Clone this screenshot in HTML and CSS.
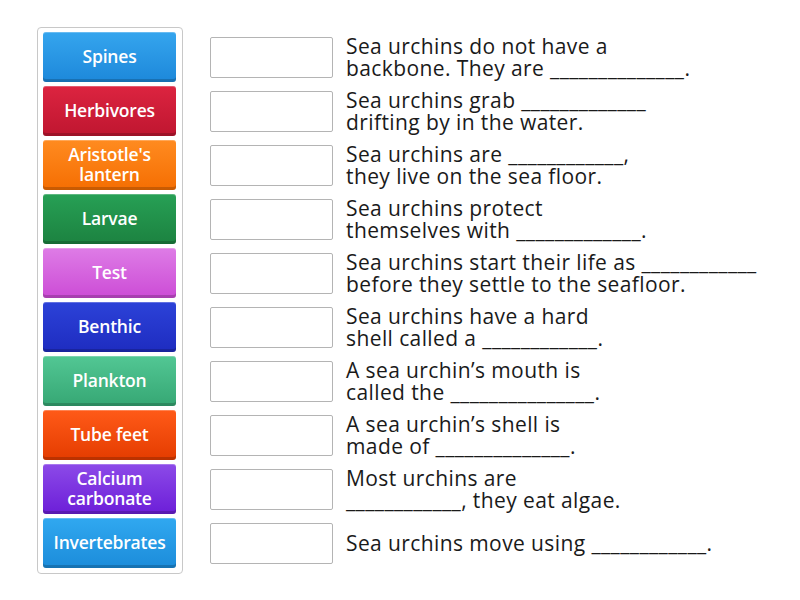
FILE: index.html
```html
<!DOCTYPE html>
<html>
<head>
<meta charset="utf-8">
<link rel="stylesheet" href="styles.css">
</head>
<body>
<div class="game">
  <div class="bank">
    <div class="tile blue">Spines</div>
    <div class="tile red">Herbivores</div>
    <div class="tile orange">Aristotle's lantern</div>
    <div class="tile green">Larvae</div>
    <div class="tile pink">Test</div>
    <div class="tile navy">Benthic</div>
    <div class="tile mint">Plankton</div>
    <div class="tile flame">Tube feet</div>
    <div class="tile purple">Calcium carbonate</div>
    <div class="tile sky">Invertebrates</div>
  </div>
  <div class="rows">
    <div class="row"><div class="slot"></div><div class="q">Sea urchins do not have a<br>backbone. They are ______________.</div></div>
    <div class="row"><div class="slot"></div><div class="q">Sea urchins grab _____________<br>drifting by in the water.</div></div>
    <div class="row"><div class="slot"></div><div class="q">Sea urchins are ____________,<br>they live on the sea floor.</div></div>
    <div class="row"><div class="slot"></div><div class="q">Sea urchins protect<br>themselves with _____________.</div></div>
    <div class="row"><div class="slot"></div><div class="q">Sea urchins start their life as ____________<br>before they settle to the seafloor.</div></div>
    <div class="row"><div class="slot"></div><div class="q">Sea urchins have a hard<br>shell called a ____________.</div></div>
    <div class="row"><div class="slot"></div><div class="q">A sea urchin’s mouth is<br>called the _______________.</div></div>
    <div class="row"><div class="slot"></div><div class="q">A sea urchin’s shell is<br>made of ______________.</div></div>
    <div class="row"><div class="slot"></div><div class="q">Most urchins are<br>____________, they eat algae.</div></div>
    <div class="row"><div class="slot"></div><div class="q">Sea urchins move using ____________.</div></div>
  </div>
</div>
</body>
</html>
```

FILE: styles.css
```css
html, body {
  margin: 0;
  padding: 0;
  background: #ffffff;
}

.game {
  display: flex;
  align-items: flex-start;
  padding: 27px 0 0 37px;
  gap: 27px;
  font-family: "Open Sans", "Noto Sans", sans-serif;
}

.bank {
  width: 133px;
  padding: 4px 6px 5px 5px;
  border: 1px solid #c8c8c8;
  border-radius: 4px;
  display: flex;
  flex-direction: column;
  gap: 4px;
}

.tile {
  height: 50px;
  border-radius: 3px;
  color: #ffffff;
  font-size: 17.5px;
  font-weight: 600;
  line-height: 20px;
  letter-spacing: -0.2px;
  display: flex;
  align-items: center;
  justify-content: center;
  text-align: center;
  padding: 0 4px 3px;
  box-sizing: border-box;
  box-shadow: inset 0 -3px 0 rgba(0, 0, 0, 0.18), inset 0 1px 0 rgba(255, 255, 255, 0.25);
}

.blue   { background: linear-gradient(#35a5ee, #1d88da); }
.red    { background: linear-gradient(#dc2440, #bf1630); }
.orange { background: linear-gradient(#ff8b20, #f56e02); }
.green  { background: linear-gradient(#27a055, #1c8240); }
.pink   { background: linear-gradient(#de7ce6, #cc4cd6); }
.navy   { background: linear-gradient(#2c42d8, #1e2cc0); }
.mint   { background: linear-gradient(#52c794, #36a774); }
.flame  { background: linear-gradient(#ff5a18, #e43c00); }
.purple { background: linear-gradient(#8c4ae8, #6c1ed8); }
.sky    { background: linear-gradient(#30a8f0, #1c8cda); }

.rows {
  display: flex;
  flex-direction: column;
  gap: 4px;
  padding-top: 5px;
}

.row {
  height: 50px;
  display: flex;
  align-items: center;
  gap: 13px;
}

.slot {
  width: 121px;
  height: 39px;
  border: 1px solid #b4b4b4;
  border-radius: 2px;
  background: #ffffff;
  flex: none;
}

.q {
  font-size: 21px;
  line-height: 22px;
  letter-spacing: 0.4px;
  color: #1a1a1a;
  white-space: nowrap;
}
```
